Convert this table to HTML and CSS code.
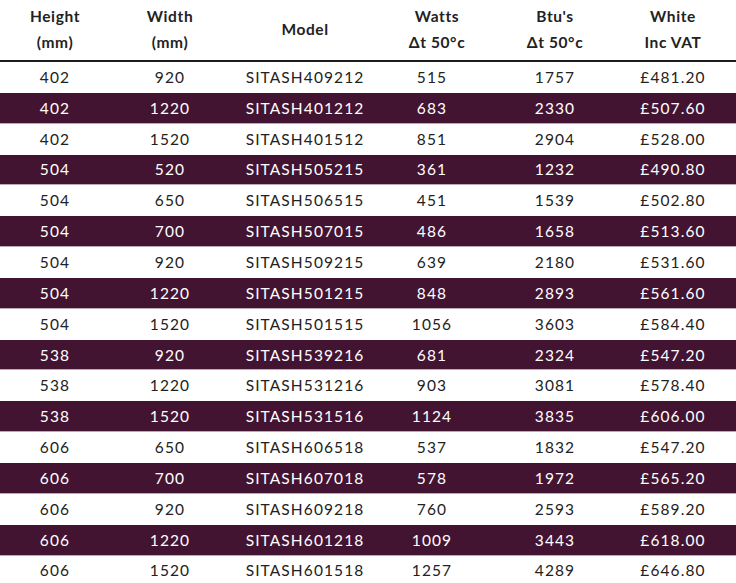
FILE: index.html
```html
<!DOCTYPE html>
<html>
<head>
<meta charset="utf-8">
<link rel="stylesheet" href="styles.css">
</head>
<body>
<table class="spec">
  <colgroup>
    <col class="c1"><col class="c2"><col class="c3"><col class="c4"><col class="c5"><col class="c6">
  </colgroup>
  <thead>
    <tr>
      <th>Height<br>(mm)</th>
      <th>Width<br>(mm)</th>
      <th>Model</th>
      <th class="sh">Watts<br>Δt 50°c</th>
      <th>Btu's<br>Δt 50°c</th>
      <th>White<br>Inc VAT</th>
    </tr>
  </thead>
  <tbody>
    <tr><td>402</td><td>920</td><td>SITASH409212</td><td>515</td><td>1757</td><td>£481.20</td></tr>
    <tr><td>402</td><td>1220</td><td>SITASH401212</td><td>683</td><td>2330</td><td>£507.60</td></tr>
    <tr><td>402</td><td>1520</td><td>SITASH401512</td><td>851</td><td>2904</td><td>£528.00</td></tr>
    <tr><td>504</td><td>520</td><td>SITASH505215</td><td>361</td><td>1232</td><td>£490.80</td></tr>
    <tr><td>504</td><td>650</td><td>SITASH506515</td><td>451</td><td>1539</td><td>£502.80</td></tr>
    <tr><td>504</td><td>700</td><td>SITASH507015</td><td>486</td><td>1658</td><td>£513.60</td></tr>
    <tr><td>504</td><td>920</td><td>SITASH509215</td><td>639</td><td>2180</td><td>£531.60</td></tr>
    <tr><td>504</td><td>1220</td><td>SITASH501215</td><td>848</td><td>2893</td><td>£561.60</td></tr>
    <tr><td>504</td><td>1520</td><td>SITASH501515</td><td>1056</td><td>3603</td><td>£584.40</td></tr>
    <tr><td>538</td><td>920</td><td>SITASH539216</td><td>681</td><td>2324</td><td>£547.20</td></tr>
    <tr><td>538</td><td>1220</td><td>SITASH531216</td><td>903</td><td>3081</td><td>£578.40</td></tr>
    <tr><td>538</td><td>1520</td><td>SITASH531516</td><td>1124</td><td>3835</td><td>£606.00</td></tr>
    <tr><td>606</td><td>650</td><td>SITASH606518</td><td>537</td><td>1832</td><td>£547.20</td></tr>
    <tr><td>606</td><td>700</td><td>SITASH607018</td><td>578</td><td>1972</td><td>£565.20</td></tr>
    <tr><td>606</td><td>920</td><td>SITASH609218</td><td>760</td><td>2593</td><td>£589.20</td></tr>
    <tr><td>606</td><td>1220</td><td>SITASH601218</td><td>1009</td><td>3443</td><td>£618.00</td></tr>
    <tr><td>606</td><td>1520</td><td>SITASH601518</td><td>1257</td><td>4289</td><td>£646.80</td></tr>
  </tbody>
</table>
</body>
</html>
```
FILE: styles.css
```css
html, body {
  margin: 0;
  padding: 0;
  background: #ffffff;
}
body {
  font-family: Lato, "Open Sans", sans-serif;
  color: #222222;
}
.spec {
  width: 736px;
  border-collapse: collapse;
  table-layout: fixed;
}
.c1 { width: 110px; }
.c2 { width: 120px; }
.c3 { width: 150px; }
.c4 { width: 104px; }
.c5 { width: 142px; }
.c6 { width: 110px; }
.spec th {
  height: 57px;
  padding: 0 0 3px 0;
  font-size: 15.5px;
  font-weight: 700;
  letter-spacing: 0.6px;
  line-height: 26px;
  text-align: center;
  vertical-align: middle;
  border-bottom: 2px solid #1c1c1c;
}
.spec th:last-child,
.spec td:last-child {
  padding-right: 16px;
}
.spec th.sh {
  padding-left: 10px;
}
.spec td {
  height: 29.85px;
  padding: 0 0 1px 0;
  font-size: 15.5px;
  letter-spacing: 1.1px;
  text-align: center;
  vertical-align: middle;
  line-height: 20px;
}
.spec tbody tr:nth-child(even) {
  background: #431432;
  color: #ffffff;
}
.spec tbody tr:nth-child(even) td {
  box-shadow: inset 0 -1px 0 #b9aab4;
}
```
